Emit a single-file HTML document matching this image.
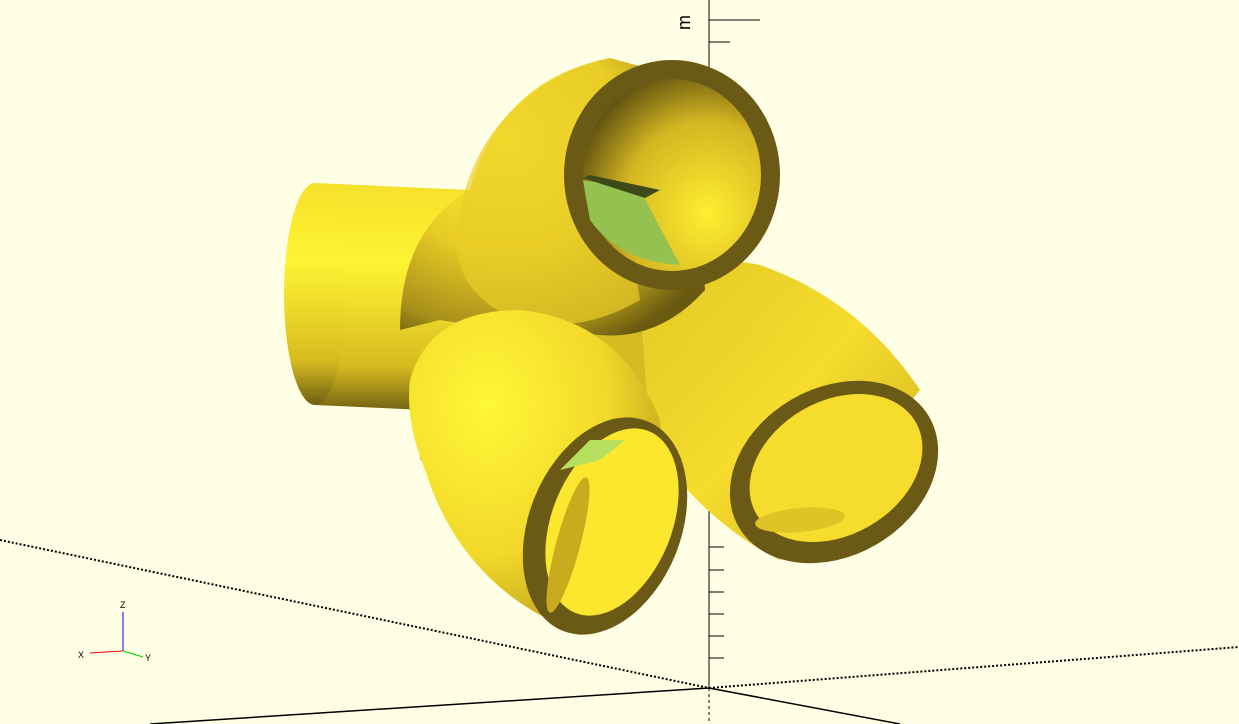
<!DOCTYPE html>
<html><head><style>html,body{margin:0;padding:0;background:#ffffe5;overflow:hidden}svg{display:block}</style></head>
<body>
<svg width="1239" height="724" viewBox="0 0 1239 724" xmlns="http://www.w3.org/2000/svg">
<defs>
<linearGradient id="cyl" x1="0" y1="0" x2="0" y2="1">
<stop offset="0" stop-color="#f6e02a"/><stop offset="0.35" stop-color="#fef433"/><stop offset="0.8" stop-color="#d8bb20"/><stop offset="1" stop-color="#6f5f12"/></linearGradient>
<radialGradient id="el1" cx="0.35" cy="0.3" r="0.8">
<stop offset="0" stop-color="#fff234"/><stop offset="0.5" stop-color="#e8cc26"/><stop offset="0.85" stop-color="#a88f1a"/><stop offset="1" stop-color="#6a5a10"/></radialGradient>
<radialGradient id="el2" cx="0.3" cy="0.3" r="0.85">
<stop offset="0" stop-color="#fff836"/><stop offset="0.55" stop-color="#f2d82a"/><stop offset="0.85" stop-color="#c4a81e"/><stop offset="1" stop-color="#8a7414"/></radialGradient>
<linearGradient id="el3" x1="0" y1="0" x2="1" y2="1">
<stop offset="0" stop-color="#e2c824"/><stop offset="0.5" stop-color="#f6dc2c"/><stop offset="1" stop-color="#c8ac1e"/></linearGradient>
<radialGradient id="in1" cx="0.7" cy="0.7" r="0.8">
<stop offset="0" stop-color="#ffee30"/><stop offset="0.6" stop-color="#d4b622"/><stop offset="1" stop-color="#5a4c0e"/></radialGradient>
</defs>
<g stroke="#000" fill="none">
<line x1="709" y1="0" x2="709" y2="688" stroke-width="1"/>
<line x1="709" y1="688" x2="709" y2="724" stroke-dasharray="3,3"/>
<line x1="0" y1="540" x2="709" y2="688" stroke-dasharray="2,2" stroke-width="2"/>
<line x1="709" y1="688" x2="1239" y2="647" stroke-dasharray="2,2" stroke-width="2"/>
<line x1="709" y1="688" x2="150" y2="724" stroke-width="1.5"/>
<line x1="709" y1="688" x2="900" y2="724" stroke-width="1.5"/>
<g stroke-width="1">
<line x1="709" y1="20" x2="760" y2="20"/><line x1="709" y1="42" x2="730" y2="42"/>
<line x1="709" y1="547" x2="724" y2="547"/><line x1="709" y1="570" x2="724" y2="570"/>
<line x1="709" y1="592" x2="724" y2="592"/><line x1="709" y1="614" x2="724" y2="614"/>
<line x1="709" y1="636" x2="724" y2="636"/><line x1="709" y1="658" x2="724" y2="658"/>
</g>
</g>
<text x="690" y="30" font-family="Liberation Sans,sans-serif" font-size="18" transform="rotate(-90 690 30)" fill="#000">m</text>
<line x1="123" y1="612" x2="123" y2="651" stroke="#00f"/>
<line x1="90" y1="653" x2="123" y2="651" stroke="#f00"/>
<line x1="123" y1="651" x2="143" y2="657" stroke="#0c0"/>
<text x="120" y="608" font-family="Liberation Sans,sans-serif" font-size="9">Z</text>
<text x="78" y="658" font-family="Liberation Sans,sans-serif" font-size="9">X</text>
<text x="145" y="661" font-family="Liberation Sans,sans-serif" font-size="9">Y</text>
<!-- central filler -->
<path d="M410 260 L700 250 L700 470 L420 460 Z" fill="#d6ba22"/>
<!-- right elbow -->
<path d="M640 300 Q690 250 760 265 Q860 300 920 390 L780 560 Q700 520 650 440 Z" fill="url(#el3)"/>
<!-- left cylinder -->
<path d="M315 183 L470 190 L470 412 L315 405 Z" fill="url(#cyl)"/>
<ellipse cx="315" cy="294" rx="31" ry="111" fill="url(#cyl)"/>
<!-- upper elbow -->
<path d="M400 330 Q400 230 470 190 Q500 80 610 58 L690 80 L705 290 Q660 340 600 335 Q500 330 440 320 Z" fill="url(#el1)"/>
<path d="M455 240 Q470 100 600 60 L640 300 Q580 335 520 320 Q460 300 455 240 Z" fill="#e9cd28" opacity="0.7"/>
<!-- lower elbow -->
<path d="M410 380 Q430 310 520 310 Q620 320 660 420 L670 520 L600 630 L560 625 Q460 580 425 470 Q405 420 410 380 Z" fill="url(#el2)"/>
<!-- top ring -->
<ellipse cx="672" cy="175" rx="108" ry="115" fill="#6b5a16"/>
<ellipse cx="672" cy="175" rx="89" ry="96" fill="url(#in1)"/>
<path d="M583 180 L640 190 L680 265 Q620 262 590 220 Z" fill="#95c150"/>
<path d="M583 178 L645 198 L660 190 L590 175 Z" fill="#3e4a1a"/>
<!-- bottom-left ring -->
<ellipse cx="605" cy="526" rx="76" ry="113" transform="rotate(22 605 526)" fill="#6b5a16"/>
<ellipse cx="612" cy="522" rx="60" ry="98" transform="rotate(22 612 522)" fill="#fbe72e"/>
<path d="M560 470 L600 460 L625 440 L590 440 Z" fill="#b6e05e"/>
<ellipse cx="568" cy="545" rx="12" ry="70" transform="rotate(15 568 545)" fill="#c8ac1e"/>
<!-- right ring -->
<ellipse cx="834" cy="472" rx="110" ry="84" transform="rotate(-30 834 472)" fill="#6b5a16"/>
<ellipse cx="836" cy="468" rx="92" ry="67" transform="rotate(-30 836 468)" fill="#f6dc2c"/>
<ellipse cx="800" cy="520" rx="45" ry="12" transform="rotate(-5 800 520)" fill="#e0c426"/>
</svg>
</body></html>
